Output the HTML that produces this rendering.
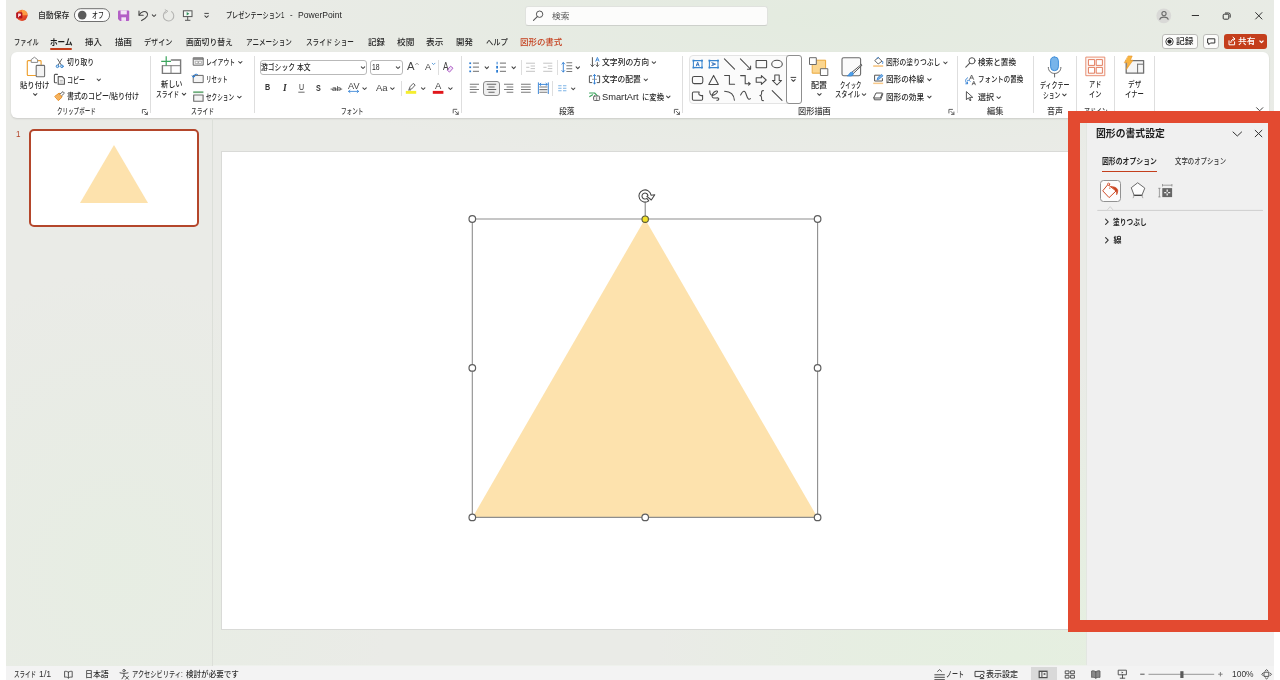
<!DOCTYPE html>
<html lang="ja">
<head>
<meta charset="utf-8">
<title>プレゼンテーション1 - PowerPoint</title>
<style>
html,body{margin:0;padding:0;}
body{width:1280px;height:680px;overflow:hidden;background:#fff;font-family:"Liberation Sans","Noto Sans CJK JP",sans-serif;}
#app{position:relative;width:1280px;height:680px;overflow:hidden;background:#fff;}
#app div{position:absolute;box-sizing:border-box;}
#win{left:6px;top:0;width:1268px;height:680px;background:#eaebe7;overflow:hidden;}
#glow{left:0;top:0;width:1268px;height:680px;background:
 radial-gradient(ellipse 360px 300px at 1010px 660px, rgba(229,239,224,1), rgba(229,239,224,.75) 45%, rgba(229,239,224,0) 100%),
 radial-gradient(ellipse 620px 150px at 820px 20px, rgba(227,235,223,.95), rgba(227,235,223,0) 100%),
 radial-gradient(ellipse 280px 300px at 110px 570px, rgba(230,238,226,.8), rgba(230,238,226,0) 100%);}
#search{left:524.5px;top:6px;width:243px;height:19.6px;background:#fcfcfb;border:1px solid #e0e2de;border-bottom-color:#cdd0cb;border-radius:3px;}
#ribbon{left:11px;top:52px;width:1258px;height:66px;background:#fff;border-radius:6px;box-shadow:0 1px 2px rgba(0,0,0,.13);}
.sep{width:1px;background:#dedede;}
#hometab{left:50px;top:48px;width:22px;height:2px;background:#c43e1c;border-radius:1px;}
.combo{background:#fff;border:1px solid #b9b9b9;border-radius:3px;}
#gallery{left:688.5px;top:55px;width:113px;height:49.3px;background:#fbfbfb;border:1px solid #e4e4e4;border-radius:4px;}
#galbtn{left:785.8px;top:55px;width:15.8px;height:49.3px;background:#fff;border:1px solid #8f8f8f;border-radius:3px;}
#alignsel{left:483px;top:80.5px;width:17px;height:15.5px;background:#f0f0f0;border:1px solid #8c8c8c;border-radius:3px;}
.btn{background:#fcfcfb;border:1px solid #bcbcb9;border-radius:3px;}
#share{left:1224px;top:33.8px;width:43px;height:15.4px;background:#c43e1c;border-radius:3px;}
#thumbdiv{left:212px;top:118px;width:1px;height:548px;background:#dcdfd9;}
#thumb{left:28.5px;top:128.5px;width:170.6px;height:98.5px;background:#fff;border:2px solid #b4462b;border-radius:5px;}
#slide{left:220.6px;top:151px;width:858px;height:478.6px;background:#fff;border:1px solid #d9dad7;}
#pane{left:1085.8px;top:118px;width:188.2px;height:548px;background:#f0f0f0;border-left:1px solid #e3e6e1;}
#panestrip{left:213px;top:665px;width:873.5px;height:1px;background:#eef1ec;}
#redbox{left:1068px;top:111px;width:212px;height:521px;border:12px solid #e34a30;z-index:5;}
#optul{left:1102px;top:170.5px;width:55px;height:1.5px;background:#c43e1c;}
#fillbtn{left:1099.5px;top:180.3px;width:21.4px;height:21.3px;background:#fcfcfc;border:1px solid #929292;border-radius:3.5px;}
#paneline{left:1097.5px;top:209.7px;width:165px;height:1px;background:#d6d6d6;}
#status{left:6px;top:666px;width:1268px;height:14px;background:#f3f3f3;}
#viewsel{left:1030.5px;top:667.4px;width:26px;height:12.6px;background:#d9d9d9;}
#texts{position:absolute;left:0;top:0;width:1280px;height:680px;will-change:transform;}
#texts .t{position:absolute;white-space:pre;transform-origin:0 50%;display:block;}
#icons{position:absolute;left:0;top:0;width:1280px;height:680px;overflow:visible;}

</style>
</head>
<body>
<div id="app">
<div id="win"><div id="glow"></div></div>
<div id="search"></div>
<div id="hometab"></div>
<div id="ribbon"></div>
<div class="sep" style="left:150px;top:56px;height:57px"></div>
<div class="sep" style="left:254px;top:56px;height:57px"></div>
<div class="sep" style="left:461px;top:56px;height:57px"></div>
<div class="sep" style="left:682px;top:56px;height:57px"></div>
<div class="sep" style="left:957px;top:56px;height:57px"></div>
<div class="sep" style="left:1033px;top:56px;height:57px"></div>
<div class="sep" style="left:1076px;top:56px;height:57px"></div>
<div class="sep" style="left:1114px;top:56px;height:57px"></div>
<div class="sep" style="left:1154px;top:56px;height:57px"></div>
<div class="sep" style="left:438px;top:60px;height:15px"></div>
<div class="sep" style="left:401px;top:81px;height:15px"></div>
<div class="sep" style="left:521px;top:60px;height:15px"></div>
<div class="sep" style="left:557px;top:60px;height:15px"></div>
<div class="sep" style="left:552px;top:81px;height:15px"></div>
<div class="combo" style="left:259.5px;top:60px;width:107.5px;height:14.5px"></div>
<div class="combo" style="left:369.5px;top:60px;width:33px;height:14.5px"></div>
<div id="alignsel"></div>
<div id="gallery"></div>
<div id="galbtn"></div>
<div class="btn" style="left:1162.2px;top:33.6px;width:35.5px;height:15.6px"></div>
<div class="btn" style="left:1203px;top:33.6px;width:16px;height:15.6px"></div>
<div id="share"></div>
<div id="thumbdiv"></div>
<div id="thumb"></div>
<div id="slide"></div>
<div id="pane"></div>
<div id="panestrip"></div>
<div id="optul"></div>
<div id="fillbtn"></div>
<div id="paneline"></div>
<div id="status"></div>
<div id="viewsel"></div>
<div id="redbox"></div>

<svg id="icons" width="1280" height="680" viewBox="0 0 1280 680">
<defs>
<linearGradient id="ppg" x1="0" y1="0" x2="1" y2="1"><stop offset="0" stop-color="#ff9a3c"/><stop offset=".55" stop-color="#f0562a"/><stop offset="1" stop-color="#c92b1e"/></linearGradient>
<path id="car" d="M-1.7,-0.8 L0,0.9 L1.7,-0.8" fill="none" stroke="#404040" stroke-width="1.05" stroke-linecap="round" stroke-linejoin="round"/>
<g id="launch"><path d="M0,3.6 V0 H3.6" fill="none" stroke="#555" stroke-width=".9"/><path d="M2,2 L5,5 M5,2.6 V5 H2.6" fill="none" stroke="#555" stroke-width=".9"/></g>
</defs>
<!-- triangle on slide -->
<polygon points="645,219 817.5,517.5 472.5,517.5" fill="#fde2ad"/>
<!-- thumbnail triangle -->
<polygon points="114,145 148,203 80,203" fill="#fde2ad"/>
<g id="titlebar">
<!-- ppt logo -->
<circle cx="22" cy="15.3" r="5.6" fill="url(#ppg)"/>
<path d="M22,9.7 A5.6,5.6 0 0 1 27.6,15.3 L22,15.3 Z" fill="#ffb04a" opacity=".75"/>
<rect x="16.2" y="12.2" width="6.2" height="6.2" rx="1.2" fill="#b3131f"/>
<path d="M18.1,13.5 h1.6 a1.3,1.3 0 0 1 0,2.6 h-.6 v1.1 h-1 z" fill="#ffd9e0"/>
<!-- toggle -->
<rect x="74.4" y="8.7" width="35.2" height="12.8" rx="6.4" fill="#fdfdfd" stroke="#616161" stroke-width=".9"/>
<circle cx="82.2" cy="15.1" r="4.3" fill="#5c5c5c"/>
<!-- save -->
<path d="M118,11.4 a1,1 0 0 1 1,-1 h9.2 a1,1 0 0 1 1,1 v8.5 a1,1 0 0 1 -1,1 h-8.2 l-2,-2 z" fill="#b35fc6"/>
<rect x="120.6" y="10.4" width="6.2" height="4" fill="#f3e6f6"/>
<rect x="121.4" y="17.3" width="4.6" height="3.6" fill="#f3e6f6"/>
<!-- undo -->
<path d="M139,11 v4.2 h4.2" fill="none" stroke="#444" stroke-width="1.1" stroke-linecap="round" stroke-linejoin="round"/>
<path d="M139.2,15 C141,11.6 145,10.6 146.9,12.6 C148.8,14.8 147.2,17.6 141.6,20.6" fill="none" stroke="#444" stroke-width="1.1" stroke-linecap="round"/>
<use href="#car" x="154" y="15.6"/>
<!-- redo (disabled) -->
<path d="M171.6,11.6 A5.2,5.2 0 1 1 165.4,11.7" fill="none" stroke="#b4b4b2" stroke-width="1.1" stroke-linecap="round"/>
<path d="M165.2,9.8 L167.8,11.2 L165.6,13" fill="none" stroke="#b4b4b2" stroke-width="1" stroke-linecap="round" stroke-linejoin="round"/>
<!-- present -->
<rect x="183.4" y="10.8" width="8.6" height="5.8" fill="#f4f8f4" stroke="#555" stroke-width="1"/>
<path d="M186.7,12 L189.3,13.7 L186.7,15.4 Z" fill="#2f8f5b"/>
<path d="M187.7,16.6 V20.2 M185,20.3 H190.4" fill="none" stroke="#555" stroke-width="1"/>
<!-- qat customize -->
<path d="M204.4,13.4 H208.8" stroke="#444" stroke-width="1" fill="none"/>
<use href="#car" x="206.6" y="16.6"/>
<!-- search magnifier -->
<circle cx="539.6" cy="14.2" r="3.2" fill="none" stroke="#555" stroke-width="1"/>
<path d="M537.3,16.6 L533.5,20.4" stroke="#555" stroke-width="1.1" stroke-linecap="round"/>
<!-- avatar -->
<circle cx="1163.8" cy="15.8" r="7.4" fill="#d9d9d7"/>
<circle cx="1164" cy="13.6" r="2.1" fill="none" stroke="#6a6a6a" stroke-width="1.1"/>
<path d="M1159.8,19.8 C1160.2,16.2 1167.8,16.2 1168.2,19.8" fill="none" stroke="#6a6a6a" stroke-width="1.1"/>
<!-- window controls -->
<path d="M1191.8,15.5 H1199" stroke="#333" stroke-width="1"/>
<rect x="1223.2" y="14.2" width="5.6" height="5" rx="1" fill="none" stroke="#333" stroke-width="1"/>
<path d="M1225,13 h3.6 a1.6,1.6 0 0 1 1.6,1.6 v3" fill="none" stroke="#333" stroke-width="1"/>
<path d="M1255.4,12.3 L1262.2,19.3 M1262.2,12.3 L1255.4,19.3" stroke="#333" stroke-width="1"/>
<!-- record button icon -->
<circle cx="1169.5" cy="41.6" r="3.7" fill="none" stroke="#333" stroke-width=".9"/>
<circle cx="1169.5" cy="41.6" r="2.1" fill="#222"/>
<!-- comment icon -->
<path d="M1207.6,38.8 h7.2 v4.2 h-4.4 l-1.6,1.6 v-1.6 h-1.2 z" fill="none" stroke="#333" stroke-width="1" stroke-linejoin="round"/>
<!-- share icon -->
<path d="M1229,40.4 v4.4 h5.6 v-3.4" fill="none" stroke="#fff" stroke-width="1"/>
<path d="M1230.8,42.6 C1231,40.2 1232.4,39 1234.6,38.9 M1233,37.2 L1235,38.9 L1233,40.6" fill="none" stroke="#fff" stroke-width="1" stroke-linecap="round" stroke-linejoin="round"/>
<path d="M1259.9,41 L1261.5,42.6 L1263.1,41" fill="none" stroke="#fff" stroke-width="1.2" stroke-linecap="round" stroke-linejoin="round"/>
<!-- collapse ribbon chevron -->
<path d="M1256.3,107.4 L1259.7,110.8 L1263.1,107.4" fill="none" stroke="#444" stroke-width="1"/>
</g>

<g id="ribbonicons" fill="none" stroke-linecap="round" stroke-linejoin="round">
<!-- paste -->
<path d="M31.2,60.6 H28.2 a.9,.9 0 0 0 -.9,.9 V74.6 a.9,.9 0 0 0 .9,.9 H35.6" stroke="#eda02f" stroke-width="1.15"/>
<path d="M37.6,60.6 H40.2 a.9,.9 0 0 1 .9,.9 V64.6" stroke="#eda02f" stroke-width="1.15"/>
<path d="M31.2,62 V59.6 L34.4,57.2 L37.6,59.6 V62 Z" stroke="#8a8a8a" stroke-width="1" fill="#fff"/>
<rect x="36.2" y="65.4" width="8.4" height="11.4" rx=".8" fill="#f3f3f3" stroke="#707070" stroke-width="1.1"/>
<use href="#car" x="35.2" y="94.5"/>
<!-- cut -->
<path d="M57.6,59 L61.4,65.2 M61.8,59 L58,65.2" stroke="#666" stroke-width="1"/>
<circle cx="57.5" cy="66.3" r="1.3" fill="#d6e8f7" stroke="#3a86cf" stroke-width="1"/>
<circle cx="61.9" cy="66.3" r="1.3" fill="#d6e8f7" stroke="#3a86cf" stroke-width="1"/>
<!-- copy -->
<path d="M57.4,74.4 H55.2 a.8,.8 0 0 0 -.8,.8 V82 a.8,.8 0 0 0 .8,.8 H56.6" stroke="#555" stroke-width="1.1"/>
<path d="M58.2,76.6 H62.2 L64.4,78.8 V84.2 H58.2 Z" fill="#fafafa" stroke="#555" stroke-width="1.1"/>
<path d="M60.2,80.4 H62.4 M60.2,82 H62.4" stroke="#999" stroke-width=".7"/>
<use href="#car" x="98.8" y="79.8"/>
<!-- format painter -->
<path d="M55,96.2 L59.2,93 L62.2,97 L58.6,100.4 Z" fill="#f6b25c" stroke="#e88a1c" stroke-width=".9"/>
<path d="M60,94 L63,91.6 L64.4,93.2 L61.6,95.8" stroke="#666" stroke-width="1" fill="#fff"/>
<!-- launchers -->
<use href="#launch" x="142.4" y="109.5"/>
<use href="#launch" x="453.2" y="109.3"/>
<use href="#launch" x="674.4" y="109.4"/>
<use href="#launch" x="948.9" y="109.4"/>
<!-- new slide -->
<path d="M162.4,65.8 V73.4 H180.6 V60 H171.4" stroke="#7a7a7a" stroke-width="1.4" stroke-linejoin="miter"/>
<path d="M162.4,65.7 H180.4 M171,65.7 V73.4" stroke="#7a7a7a" stroke-width="1"/>
<path d="M161.2,61.3 H171 M166.2,56.2 V65.7" stroke="#3ba55d" stroke-width="1.2" stroke-linecap="butt"/>
<use href="#car" x="184" y="94.2"/>
<!-- layout -->
<rect x="193.6" y="57.8" width="9.6" height="7.4" fill="#f4f4f4" stroke="#6a6a6a" stroke-width="1"/>
<path d="M193.6,59 H203.2" stroke="#6a6a6a" stroke-width="1.4" stroke-linecap="butt"/>
<rect x="195.6" y="61.2" width="2.4" height="2.4" fill="#fff" stroke="#8a8a8a" stroke-width=".6"/>
<rect x="199" y="61.2" width="2.4" height="2.4" fill="#fff" stroke="#8a8a8a" stroke-width=".6"/>
<use href="#car" x="240.3" y="62.3"/>
<!-- reset -->
<rect x="193.6" y="75.4" width="9.6" height="7.2" fill="#f4f4f4" stroke="#6a6a6a" stroke-width="1"/>
<path d="M197.4,74.4 C195.6,73.6 193.4,74.6 193.4,77.2 M192.2,75.8 L193.4,77.4 L195,76.2" stroke="#2b7cd3" stroke-width="1"/>
<!-- section -->
<path d="M193.2,92.2 H203.4" stroke="#6fae7d" stroke-width="1.8" stroke-linecap="butt"/>
<rect x="193.7" y="95" width="9.4" height="6.2" fill="#f4f4f4" stroke="#6a6a6a" stroke-width="1.1"/>
<use href="#car" x="239.4" y="97.1"/>
<!-- combo carets -->
<use href="#car" x="363" y="67.6"/>
<use href="#car" x="398" y="67.6"/>
<!-- font grow/shrink carets -->
<path d="M415.6,64.6 L417,63.2 L418.4,64.6" stroke="#777" stroke-width=".8"/>
<path d="M432.2,63.2 L433.6,64.6 L435,63.2" stroke="#3a86cf" stroke-width=".8"/>
<!-- clear formatting eraser -->
<path d="M447.4,69.8 L450.6,66.2 L453,68.2 L449.8,71.8 Z" fill="#f3e2f8" stroke="#a650c0" stroke-width=".9"/>
<path d="M298.7,92.2 H304.2" stroke="#444" stroke-width=".8"/>
<!-- strikethrough -->
<path d="M331,89.1 H341.8" stroke="#444" stroke-width=".8"/>
<!-- AV arrow -->
<path d="M348.6,91.4 H358.6 M350,90.2 L348.6,91.4 L350,92.6 M357.2,90.2 L358.6,91.4 L357.2,92.6" stroke="#2b7cd3" stroke-width=".8"/>
<use href="#car" x="364.6" y="88.6"/>
<use href="#car" x="392.4" y="88.6"/>
<!-- highlighter -->
<path d="M409.2,89 L410,86.8 L413.2,83.4 L415.2,85 L412,88.6 Z" stroke="#555" stroke-width=".9" fill="#fff"/>
<path d="M408.4,90 L410.6,90" stroke="#555" stroke-width=".8"/>
<rect x="405.8" y="90.9" width="10.4" height="2.9" fill="#f5ee2e" stroke="none"/>
<use href="#car" x="423.2" y="88.6"/>
<!-- font color bar -->
<rect x="432.8" y="90.9" width="10.6" height="2.9" fill="#e0161b" stroke="none"/>
<use href="#car" x="450.4" y="88.6"/>
<!-- bullets -->
<g stroke="#8a8a8a" stroke-width="1.2" stroke-linecap="butt">
<path d="M472.9,63.2 H479 M472.9,67.2 H479 M472.9,71.3 H479"/>
<path d="M499.9,63.2 H506 M499.9,67.2 H506 M499.9,71.3 H506"/>
</g>
<g fill="#2b7cd3" stroke="none"><rect x="469.3" y="62.4" width="1.8" height="1.7"/><rect x="469.3" y="66.4" width="1.8" height="1.7"/><rect x="469.3" y="70.5" width="1.8" height="1.7"/>
<rect x="496.6" y="61.8" width="1" height="2.6"/><rect x="496.2" y="65.9" width="1.8" height="2.6"/><rect x="496.2" y="70" width="1.8" height="2.6"/></g>
<use href="#car" x="486.8" y="67.7"/>
<use href="#car" x="513.7" y="67.7"/>
<!-- indent (disabled) -->
<g stroke="#c4c4c4" stroke-width="1" stroke-linecap="butt">
<path d="M526,63.2 H535 M530.6,66 H535 M530.6,68.6 H535 M526,71.3 H535 M526.2,67.3 H529.4"/>
<path d="M543.2,63.2 H552.3 M547.8,66 H552.3 M547.8,68.6 H552.3 M543.2,71.3 H552.3 M543.4,67.3 H546.6"/>
</g>
<!-- line spacing -->
<path d="M563.3,62.6 V72 M561.9,64 L563.3,62.6 L564.7,64 M561.9,70.6 L563.3,72 L564.7,70.6" stroke="#2b7cd3" stroke-width=".9"/>
<path d="M566.4,62.8 H572.2 M566.4,65.8 H572.2 M566.4,68.7 H572.2 M566.4,71.5 H572.2" stroke="#7a7a7a" stroke-width="1.1" stroke-linecap="butt"/>
<use href="#car" x="577.8" y="67.7"/>
<!-- alignment -->
<g stroke="#7a7a7a" stroke-width="1.05" stroke-linecap="butt">
<path d="M469.8,84.3 H479 M469.8,86.9 H476.6 M469.8,89.5 H479 M469.8,92.2 H476.6"/>
<path d="M486.8,84.3 H496.2 M488.4,86.9 H494.6 M486.8,89.5 H496.2 M488.4,92.2 H494.6" stroke="#666"/>
<path d="M504,84.3 H513.3 M506.6,86.9 H513.3 M504,89.5 H513.3 M506.6,92.2 H513.3"/>
<path d="M521,84.3 H530.7 M521,86.9 H530.7 M521,89.5 H530.7 M521,92.2 H530.7"/>
<path d="M539.4,87 H547.4 M539.4,89.6 H547.4 M539.4,92.3 H547.4"/>
</g>
<path d="M538.4,82.8 V93.6 M548.3,82.8 V93.6 M539.6,84.4 H547.2 M540.8,83.3 L539.6,84.4 L540.8,85.5 M546,83.3 L547.2,84.4 L546,85.5" stroke="#2b7cd3" stroke-width=".9"/>
<!-- columns -->
<path d="M558.2,85.7 H561.6 M558.2,88.2 H561.6 M558.2,90.8 H561.6 M563,85.7 H566.4 M563,88.2 H566.4 M563,90.8 H566.4" stroke="#7db4e6" stroke-width="1.1" stroke-linecap="butt"/>
<use href="#car" x="573.2" y="88.8"/>
<!-- text direction -->
<path d="M592.4,57.6 V66.4 M590.8,64.8 L592.4,66.4 L594,64.8" stroke="#555" stroke-width="1"/>
<path d="M597.4,62.6 V66.4 M596,65 L597.4,66.4 L598.8,65" stroke="#555" stroke-width=".9"/>
<path d="M595.8,61.2 L597.4,57.4 L599,61.2 M596.4,60 H598.4" stroke="#2b7cd3" stroke-width=".8"/>
<use href="#car" x="653.9" y="62.6"/>
<!-- text align -->
<path d="M591.6,75.9 H589.4 V82.6 H591.6 M597.4,75.9 H599.6 V82.6 H597.4" stroke="#555" stroke-width="1" stroke-linejoin="miter"/>
<path d="M594.5,74.6 V84 M593.2,75.9 L594.5,74.6 L595.8,75.9 M593.2,82.7 L594.5,84 L595.8,82.7" stroke="#2b7cd3" stroke-width=".9"/>
<path d="M592.4,79.3 H596.6" stroke="#888" stroke-width=".8"/>
<use href="#car" x="645.8" y="79.8"/>
<!-- smartart -->
<path d="M589.6,93 H594.6 L597.2,95.6 M589.8,96.6 L592.6,94.8" stroke="#3ba55d" stroke-width="1.2"/>
<rect x="593.6" y="96" width="6" height="4.5" rx=".8" fill="#f2f2f2" stroke="#666" stroke-width="1"/>
<path d="M596.6,97.6 V100.4" stroke="#666" stroke-width=".7"/>
<use href="#car" x="668.3" y="96.9"/>
<!-- shapes gallery -->
<g stroke="#4a4a4a" stroke-width="1.05">
<!-- row1 -->
<rect x="693.4" y="60.6" width="8.6" height="7" stroke="#3a86cf" fill="#fff"/>
<g fill="#3a86cf" stroke="none"><rect x="692.5" y="59.7" width="1.8" height="1.8"/><rect x="701.1" y="59.7" width="1.8" height="1.8"/><rect x="692.5" y="66.7" width="1.8" height="1.8"/><rect x="701.1" y="66.7" width="1.8" height="1.8"/></g>
<path d="M696.3,66 L697.7,62.2 L699.1,66 M696.8,64.8 H698.6" stroke="#2b6cb8" stroke-width=".9"/>
<rect x="709.4" y="60.6" width="8.6" height="7" stroke="#3a86cf" fill="#fff"/>
<g fill="#3a86cf" stroke="none"><rect x="708.5" y="59.7" width="1.8" height="1.8"/><rect x="717.1" y="59.7" width="1.8" height="1.8"/><rect x="708.5" y="66.7" width="1.8" height="1.8"/><rect x="717.1" y="66.7" width="1.8" height="1.8"/></g>
<path d="M711.8,62.7 L715.6,64.1 L711.8,65.5 M713,63.2 V65" stroke="#2b6cb8" stroke-width=".9"/>
<path d="M724.4,58.8 L734.6,69.2"/>
<path d="M740.4,58.8 L750.4,69 M750.6,66 V69.2 H747.4" />
<rect x="756.1" y="60.5" width="10.5" height="7.2" rx=".5"/>
<ellipse cx="777" cy="64" rx="5.3" ry="3.7"/>
<!-- row2 -->
<rect x="692.4" y="76.4" width="10.4" height="7.2" rx="1.8"/>
<path d="M713.6,75.4 L718.4,84.4 H708.8 Z"/>
<path d="M724.6,75.4 H729.4 V84.2 H734.6" stroke-linejoin="miter"/>
<path d="M740.6,75.6 H745.2 V83.8 H750 M748.6,82.4 L750.2,83.8 L748.6,85.2" stroke-linejoin="miter"/>
<path d="M756.2,77.8 H761.4 V75.6 L766.2,80 L761.4,84.4 V82.2 H756.2 Z"/>
<path d="M774.8,75 H779.2 V80.4 H781.6 L777,85 L772.4,80.4 H774.8 Z"/>
<!-- row3 -->
<path d="M693.6,92 H699.2 C698,94.6 699.6,96.2 702.6,95.4 V99 Q702.6,100.2 701.4,100.2 H693.6 Q692.4,100.2 692.4,99 V93.2 Q692.4,92 693.6,92 Z"/>
<path d="M709.8,90.8 C709.6,94.2 711.2,96.4 714.4,94.8 C717.6,93.2 718.6,90.6 716.2,91 C713.4,91.6 710.4,96.4 713.2,97.8 C715.4,98.8 718.6,96.8 718.8,98.8 C718.8,99.8 718,100.4 716.8,100.2"/>
<path d="M724.6,91.2 C730.4,91.4 734,94.6 734.4,100.2"/>
<path d="M740.6,95 C743.4,89.8 745,90.4 746.4,95 C747.6,99 749,100 750.4,98.6"/>
<path d="M763.4,90.6 C761.2,90.6 761.6,92 761.6,93.4 C761.6,94.8 761,95.4 759.9,95.6 C761,95.8 761.6,96.4 761.6,97.8 C761.6,99.2 761.2,100.6 763.4,100.6"/>
<path d="M772.2,90.6 L782,100.4"/>
</g>
<!-- gallery more button glyph -->
<path d="M791,77.4 H795.8" stroke="#444" stroke-width="1"/>
<use href="#car" x="793.4" y="80.4"/>
<!-- arrange -->
<rect x="812.6" y="60.2" width="13" height="13" fill="#fbd68f" stroke="#eaa73a" stroke-width="1"/>
<rect x="809.9" y="57.7" width="6.4" height="6.8" fill="#fdfdfd" stroke="#6a6a6a" stroke-width="1"/>
<rect x="820.8" y="68.7" width="7" height="6.8" fill="#fdfdfd" stroke="#6a6a6a" stroke-width="1"/>
<use href="#car" x="819.4" y="94.4"/>
<!-- quick styles -->
<rect x="842" y="57.7" width="18.6" height="18" rx="1.6" fill="#fafafa" stroke="#6a6a6a" stroke-width="1.1"/>
<path d="M852.2,72 L861.4,64.4 L862,65.2 L853.4,73.4" stroke="#555" stroke-width="1" fill="#fff"/>
<path d="M847.8,75.8 C849.2,75 849.4,72.6 851.2,72.2 C852.8,71.8 854,73.4 853,74.8 C851.8,76.4 849.4,76.2 847.8,75.8 Z" fill="#4da0ea" stroke="#2b7cd3" stroke-width=".7"/>
<use href="#car" x="864" y="94.6"/>
<!-- shape fill -->
<path d="M878.6,57.8 L882,61.2 L878.2,64 L875,60.8 Z" stroke="#555" stroke-width=".9"/>
<path d="M877,58.2 L878.6,57.8 M882.6,61.4 C883,62.4 883,63 882.6,63.6" stroke="#2b7cd3" stroke-width=".9"/>
<rect x="873.2" y="65.2" width="10" height="1.7" fill="#f8c98a" stroke="none"/>
<use href="#car" x="945.4" y="62.8"/>
<!-- shape outline -->
<path d="M880,75.2 H874.6 V81 H882.4 V78.6" stroke="#555" stroke-width="1" stroke-linejoin="miter"/>
<path d="M877.2,79.4 L877.8,77.6 L881.6,74.4 L883,75.8 L879.2,79 Z" fill="#7db4e6" stroke="#2b7cd3" stroke-width=".8"/>
<rect x="873.2" y="82.6" width="10" height="1.5" fill="#f8c98a" stroke="none"/>
<use href="#car" x="929.4" y="79.7"/>
<!-- shape effects -->
<path d="M876.4,93 H882.4 L880.4,98 H874 Z" stroke="#555" stroke-width="1" fill="#fff"/>
<path d="M874,98 L874.4,99.8 H880.6 L882.8,94" stroke="#555" stroke-width="1"/>
<use href="#car" x="929.4" y="97"/>
<!-- find -->
<circle cx="972" cy="60.8" r="3.1" stroke="#555" stroke-width="1"/>
<path d="M969.7,63.2 L965.8,67.2" stroke="#555" stroke-width="1.1"/>
<!-- replace fonts -->
<path d="M967.6,77.8 C965,78.8 964.8,82.4 967.4,83.6 M965.8,83.8 L967.6,83.7 L967.4,81.9 M967.6,80.4 C968.8,80 969.6,80.4 970.2,81.2" stroke="#2b7cd3" stroke-width=".9"/>
<path d="M969.6,79.4 L971.6,75 L973.6,79.4 M970.4,78 H972.8" stroke="#555" stroke-width=".85"/>
<path d="M972.2,84.8 L973.8,81.2 L975.4,84.8 M972.8,83.6 H974.8" stroke="#555" stroke-width=".8"/>
<!-- select -->
<path d="M966.4,92 V99.8 L968.4,97.8 L970,100.8 L971,100.2 L969.6,97.4 H972.4 Z" stroke="#444" stroke-width=".9" fill="#fff"/>
<use href="#car" x="998.7" y="97.6"/>
<!-- dictate -->
<rect x="1050.6" y="56.9" width="7.8" height="13.8" rx="3.9" fill="#78b4ea" stroke="#3f8fda" stroke-width="1"/>
<path d="M1048.3,67.4 C1048.3,75.6 1060.9,75.6 1060.9,67.4 M1054.6,73.6 V77" stroke="#666" stroke-width="1"/>
<use href="#car" x="1064.4" y="94.9"/>
<!-- add-ins -->
<rect x="1086.2" y="57.1" width="18.6" height="18.6" fill="#fdf6f3" stroke="#e58567" stroke-width=".9"/>
<g stroke="#e0714f" stroke-width=".9" fill="#fff"><rect x="1088.8" y="59.6" width="5.8" height="5.8"/><rect x="1096.6" y="59.6" width="5.8" height="5.8"/><rect x="1088.8" y="67.4" width="5.8" height="5.8"/><rect x="1096.6" y="67.4" width="5.8" height="5.8"/></g>
<!-- designer -->
<rect x="1126.2" y="60.6" width="17.4" height="12.6" fill="#f6f6f6" stroke="#707070" stroke-width="1.3"/>
<path d="M1137.6,64.2 V73 M1137.6,64.2 H1143.4" stroke="#707070" stroke-width="1"/>
<path d="M1128.4,56 H1132.2 L1130.4,60.2 H1133 L1126.4,69.4 L1127.8,62.8 H1124.6 Z" fill="#f9b53f" stroke="#e8952a" stroke-width=".6"/>
</g>

<g id="selection" fill="none">
<path d="M472.3,219 H817.6 V517.4 H472.3 Z" stroke="#8e8e8e" stroke-width="1.1"/>
<path d="M645.2,202.6 V216" stroke="#7a7a7a" stroke-width="1"/>
<!-- rotate handle -->
<path d="M648.76,200.81 A6.1,6.1 0 1 1 651.04,195.15 L654.8,194.7 L651.3,200 L646.9,196.4 L647.97,195.58 A3.0,3.0 0 1 0 646.85,198.36 Z" fill="#fff" stroke="#444" stroke-width="1.05" stroke-linejoin="round"/>
<g fill="#fff" stroke="#5e5e5e" stroke-width="1.2">
<circle cx="472.3" cy="219" r="3.3"/><circle cx="817.6" cy="219" r="3.3"/>
<circle cx="472.3" cy="367.9" r="3.3"/><circle cx="817.6" cy="367.9" r="3.3"/>
<circle cx="472.3" cy="517.4" r="3.3"/><circle cx="645.2" cy="517.4" r="3.3"/><circle cx="817.6" cy="517.4" r="3.3"/>
</g>
<circle cx="645.2" cy="219.2" r="3.2" fill="#f3e12a" stroke="#5a5a3a" stroke-width="1.1"/>
</g>

<g id="paneicons" fill="none" stroke-linecap="round" stroke-linejoin="round">
<path d="M1233,132 L1237.3,136 L1241.6,132" stroke="#333" stroke-width="1"/>
<path d="M1255.2,130.3 L1261.9,136.8 M1261.9,130.3 L1255.2,136.8" stroke="#333" stroke-width="1"/>
<!-- paint bucket -->
<path d="M1108.2,184.8 L1116,191 L1109.1,197.6 L1103,191.1 Z" stroke="#d04a26" stroke-width="1" fill="#fff"/>
<circle cx="1108.6" cy="184.2" r="1.1" stroke="#d04a26" stroke-width=".8" fill="#fff"/>
<circle cx="1109.8" cy="188.1" r=".7" fill="#c9431f" stroke="none"/>
<path d="M1111.4,186.4 C1115,186.6 1117.8,188.4 1117.8,190.6 C1117.8,192.4 1117.2,193.8 1116.6,194.8 C1116.8,192.6 1116.4,191 1115.6,190.2 Z" fill="#c9431f" stroke="#c9431f" stroke-width=".6"/>
<!-- pentagon -->
<path d="M1138,183 L1144.8,188.1 L1141.9,195.3 H1134.1 L1131.4,188.1 Z" stroke="#6a6a6a" stroke-width="1" fill="#fdfdfd"/>
<path d="M1134.1,195.4 H1141.9" stroke="#444" stroke-width="1.1"/>
<path d="M1134,195.8 L1133.2,197.8 M1142,195.8 L1142.8,197.8" stroke="#999" stroke-width=".8"/>
<!-- size & properties -->
<rect x="1162.3" y="188.1" width="9.8" height="9" fill="#666" stroke="none"/>
<path d="M1167.2,189.6 V195.6 M1164.2,192.6 H1170.2" stroke="#f0f0f0" stroke-width="1.3" stroke-linecap="butt"/>
<rect x="1166.3" y="191.7" width="1.8" height="1.8" fill="#666" stroke="none"/>
<path d="M1162.3,185.2 H1172.1 M1162.5,184 V186.5 M1171.9,184 V186.5 M1159.4,188.1 V197.1 M1158.3,188.3 H1160.5 M1158.3,196.9 H1160.5" stroke="#8a8a8a" stroke-width=".8" stroke-linecap="butt"/>
<!-- divider with notch -->
<path d="M1097.6,210.4 H1107 L1110.2,206.6 L1113.4,210.4 H1262.4" stroke="#d2d2d2" stroke-width="1" fill="none"/>
<!-- section chevrons -->
<path d="M1105.6,219.2 L1108.2,221.8 L1105.6,224.4" stroke="#333" stroke-width="1.1"/>
<path d="M1105.6,237.6 L1108.2,240.2 L1105.6,242.8" stroke="#333" stroke-width="1.1"/>
</g>

<g id="statusicons" fill="none" stroke-linecap="round" stroke-linejoin="round">
<!-- spell book -->
<path d="M68.4,672.2 C67.2,671.2 65.6,671.2 64.6,671.4 V677.2 C65.8,677 67.2,677 68.4,678 C69.6,677 71,677 72.2,677.2 V671.4 C71.2,671.2 69.6,671.2 68.4,672.2 Z M68.4,672.2 V678" stroke="#444" stroke-width=".9"/>
<!-- accessibility -->
<circle cx="124" cy="670.6" r="1.2" stroke="#444" stroke-width=".8"/>
<path d="M120,672.8 C122.6,673.6 125.4,673.6 128,672.8 M124,673.6 V675.6 L122,678.8 M124,675.6 L125,676.6" stroke="#444" stroke-width=".9"/>
<path d="M125.6,676.4 L128.4,679.2 M128.4,676.4 L125.6,679.2" stroke="#444" stroke-width=".9"/>
<!-- notes -->
<path d="M937.6,671.4 L939.6,669.6 L941.6,671.4" stroke="#444" stroke-width=".9"/>
<path d="M934.4,674.8 H944.8 M934.4,677.3 H944.8 M934.4,679.7 H944.8" stroke="#444" stroke-width="1" stroke-linecap="butt"/>
<!-- display settings -->
<path d="M979.6,676.6 H975 V671.4 H984 V673.4" stroke="#444" stroke-width="1" stroke-linejoin="miter"/>
<circle cx="982" cy="676" r="1.7" stroke="#444" stroke-width=".9" fill="#f3f3f3"/>
<path d="M980.2,678.6 H983.8" stroke="#444" stroke-width="1"/>
<!-- normal view -->
<rect x="1038.6" y="670.6" width="9" height="7.6" fill="#4e4e4e" stroke="none"/>
<rect x="1039.8" y="672" width="1.6" height="5" fill="#ececec" stroke="none"/>
<rect x="1042.4" y="672" width="4.2" height="5" fill="#ececec" stroke="none"/>
<rect x="1043.6" y="673.2" width="1.8" height="1.6" fill="#4e4e4e" stroke="none"/>
<!-- sorter -->
<g stroke="#444" stroke-width=".9"><rect x="1065.6" y="670.9" width="3.4" height="2.8"/><rect x="1071" y="670.9" width="3.4" height="2.8"/><rect x="1065.6" y="675.3" width="3.4" height="2.8"/><rect x="1071" y="675.3" width="3.4" height="2.8"/></g>
<!-- reading view -->
<path d="M1095.8,671.8 C1094.4,670.6 1092.8,670.6 1091.6,671 V677.4 C1093,677.2 1094.6,677.2 1095.8,678.2 C1097,677.2 1098.6,677.2 1100,677.4 V671 C1098.8,670.6 1097.2,670.6 1095.8,671.8 Z" fill="#8a8a8a" stroke="#555" stroke-width=".8"/>
<path d="M1095.8,671.8 V678.2" stroke="#555" stroke-width=".8"/>
<!-- slideshow -->
<rect x="1118.6" y="670.2" width="7.8" height="4.6" stroke="#444" stroke-width=".9" fill="#f3f3f3"/>
<path d="M1121.6,671.4 L1123.4,672.5 L1121.6,673.6 Z" fill="#444" stroke="none"/>
<path d="M1122.5,674.8 V678 M1120.2,678.2 H1124.8" stroke="#444" stroke-width=".9"/>
<!-- zoom -->
<path d="M1140.2,674.2 H1144.6" stroke="#555" stroke-width="1" stroke-linecap="butt"/>
<path d="M1148.5,674.3 H1214.2" stroke="#8c8c8c" stroke-width=".9" stroke-linecap="butt"/>
<rect x="1180.3" y="671.2" width="3.2" height="6.8" fill="#5a5a5a" stroke="none"/>
<path d="M1218.2,674.2 H1222.6 M1220.4,672 V676.4" stroke="#777" stroke-width=".9" stroke-linecap="butt"/>
<!-- fit -->
<rect x="1264.4" y="672.2" width="4.4" height="4.2" stroke="#444" stroke-width=".9"/>
<path d="M1265.2,670.9 L1266.6,669.7 L1268,670.9 M1265.2,677.7 L1266.6,678.9 L1268,677.7 M1263,673 L1261.8,674.3 L1263,675.6 M1270.2,673 L1271.4,674.3 L1270.2,675.6" stroke="#444" stroke-width=".9"/>
</g>

</svg>

<div id="texts">
<span class="t" style="left:37.9px;top:10.25px;height:12.3px;line-height:12.3px;font-size:8.2px;color:#262626;font-weight:500;transform:scaleX(0.9614);">自動保存</span>
<span class="t" style="left:91.8px;top:10.4px;height:12.0px;line-height:12.0px;font-size:8px;color:#262626;font-weight:500;transform:scaleX(0.7375);">オフ</span>
<span class="t" style="left:225.9px;top:10.25px;height:12.3px;line-height:12.3px;font-size:8.2px;color:#262626;font-weight:500;transform:scaleX(0.7467);">プレゼンテーション1</span>
<span class="t" style="left:289.6px;top:10.25px;height:12.3px;line-height:12.3px;font-size:8.2px;color:#262626;font-weight:500;transform:scaleX(0.9509);">-</span>
<span class="t" style="left:297.6px;top:10.25px;height:12.3px;line-height:12.3px;font-size:8.2px;color:#262626;font-weight:500;transform:scaleX(1.0460);">PowerPoint</span>
<span class="t" style="left:551.9px;top:11.05px;height:12.3px;line-height:12.3px;font-size:8.2px;color:#555;font-weight:400;transform:scaleX(1.0677);">検索</span>
<span class="t" style="left:13.6px;top:37.05px;height:12.3px;line-height:12.3px;font-size:8.2px;color:#262626;font-weight:500;transform:scaleX(0.7569);">ファイル</span>
<span class="t" style="left:49.9px;top:37.05px;height:12.3px;line-height:12.3px;font-size:8.2px;color:#1a1a1a;font-weight:700;transform:scaleX(0.9249);">ホーム</span>
<span class="t" style="left:84.6px;top:37.05px;height:12.3px;line-height:12.3px;font-size:8.2px;color:#262626;font-weight:500;transform:scaleX(1.0250);">挿入</span>
<span class="t" style="left:114.6px;top:37.05px;height:12.3px;line-height:12.3px;font-size:8.2px;color:#262626;font-weight:500;transform:scaleX(1.0250);">描画</span>
<span class="t" style="left:144.1px;top:37.05px;height:12.3px;line-height:12.3px;font-size:8.2px;color:#262626;font-weight:500;transform:scaleX(0.8637);">デザイン</span>
<span class="t" style="left:185.6px;top:37.05px;height:12.3px;line-height:12.3px;font-size:8.2px;color:#262626;font-weight:500;transform:scaleX(0.9524);">画面切り替え</span>
<span class="t" style="left:245.6px;top:37.05px;height:12.3px;line-height:12.3px;font-size:8.2px;color:#262626;font-weight:500;transform:scaleX(0.8035);">アニメーション</span>
<span class="t" style="left:305.6px;top:37.05px;height:12.3px;line-height:12.3px;font-size:8.2px;color:#262626;font-weight:500;transform:scaleX(0.8021);">スライド ショー</span>
<span class="t" style="left:367.6px;top:37.05px;height:12.3px;line-height:12.3px;font-size:8.2px;color:#262626;font-weight:500;transform:scaleX(1.0250);">記録</span>
<span class="t" style="left:397.1px;top:37.05px;height:12.3px;line-height:12.3px;font-size:8.2px;color:#262626;font-weight:500;transform:scaleX(1.0555);">校閲</span>
<span class="t" style="left:426.1px;top:37.05px;height:12.3px;line-height:12.3px;font-size:8.2px;color:#262626;font-weight:500;transform:scaleX(1.0555);">表示</span>
<span class="t" style="left:455.6px;top:37.05px;height:12.3px;line-height:12.3px;font-size:8.2px;color:#262626;font-weight:500;transform:scaleX(1.0250);">開発</span>
<span class="t" style="left:485.6px;top:37.05px;height:12.3px;line-height:12.3px;font-size:8.2px;color:#262626;font-weight:500;transform:scaleX(0.8870);">ヘルプ</span>
<span class="t" style="left:520.1px;top:37.05px;height:12.3px;line-height:12.3px;font-size:8.2px;color:#c43e1c;font-weight:500;transform:scaleX(1.0329);">図形の書式</span>
<span class="t" style="left:1176.0px;top:36.45px;height:12.3px;line-height:12.3px;font-size:8.2px;color:#262626;font-weight:500;transform:scaleX(1.0616);">記録</span>
<span class="t" style="left:1238.4px;top:36.45px;height:12.3px;line-height:12.3px;font-size:8.2px;color:#fff;font-weight:500;transform:scaleX(1.0555);">共有</span>
<span class="t" style="left:19.9px;top:79.65px;height:12.3px;line-height:12.3px;font-size:8.2px;color:#262626;font-weight:500;transform:scaleX(0.8942);">貼り付け</span>
<span class="t" style="left:67.3px;top:57.25px;height:12.3px;line-height:12.3px;font-size:8.2px;color:#262626;font-weight:500;transform:scaleX(0.8271);">切り取り</span>
<span class="t" style="left:67.3px;top:74.55px;height:12.3px;line-height:12.3px;font-size:8.2px;color:#262626;font-weight:500;transform:scaleX(0.7364);">コピー</span>
<span class="t" style="left:67.3px;top:91.45px;height:12.3px;line-height:12.3px;font-size:8.2px;color:#262626;font-weight:500;transform:scaleX(0.8544);">書式のコピー/貼り付け</span>
<span class="t" style="left:57.1px;top:106.05px;height:12.3px;line-height:12.3px;font-size:8.2px;color:#3a3a3a;font-weight:500;transform:scaleX(0.6768);">クリップボード</span>
<span class="t" style="left:161.4px;top:78.75px;height:12.3px;line-height:12.3px;font-size:8.2px;color:#262626;font-weight:500;transform:scaleX(0.8748);">新しい</span>
<span class="t" style="left:156.4px;top:88.95px;height:12.3px;line-height:12.3px;font-size:8.2px;color:#262626;font-weight:500;transform:scaleX(0.7050);">スライド</span>
<span class="t" style="left:205.9px;top:56.65px;height:12.3px;line-height:12.3px;font-size:8.2px;color:#262626;font-weight:500;transform:scaleX(0.7081);">レイアウト</span>
<span class="t" style="left:205.9px;top:74.45px;height:12.3px;line-height:12.3px;font-size:8.2px;color:#262626;font-weight:500;transform:scaleX(0.6623);">リセット</span>
<span class="t" style="left:206.4px;top:91.65px;height:12.3px;line-height:12.3px;font-size:8.2px;color:#262626;font-weight:500;transform:scaleX(0.6837);">セクション</span>
<span class="t" style="left:191.1px;top:106.05px;height:12.3px;line-height:12.3px;font-size:8.2px;color:#3a3a3a;font-weight:500;transform:scaleX(0.7050);">スライド</span>
<span class="t" style="left:261.4px;top:61.95px;height:12.3px;line-height:12.3px;font-size:8.2px;color:#262626;font-weight:500;transform:scaleX(0.8306);">游ゴシック 本文</span>
<span class="t" style="left:372px;top:61.95px;height:12.3px;line-height:12.3px;font-size:8.2px;color:#262626;font-weight:500;transform:scaleX(0.8343);">18</span>
<span class="t" style="left:341.4px;top:106.05px;height:12.3px;line-height:12.3px;font-size:8.2px;color:#3a3a3a;font-weight:500;transform:scaleX(0.6806);">フォント</span>
<span class="t" style="left:602.4px;top:57.05px;height:12.3px;line-height:12.3px;font-size:8.2px;color:#262626;font-weight:500;transform:scaleX(0.9564);">文字列の方向</span>
<span class="t" style="left:602.4px;top:74.35px;height:12.3px;line-height:12.3px;font-size:8.2px;color:#262626;font-weight:500;transform:scaleX(0.9474);">文字の配置</span>
<span class="t" style="left:602.4px;top:91.75px;height:12.3px;line-height:12.3px;font-size:8.2px;color:#262626;font-weight:500;transform:scaleX(1.1358);">SmartArt</span>
<span class="t" style="left:641.7px;top:91.75px;height:12.3px;line-height:12.3px;font-size:8.2px;color:#262626;font-weight:500;transform:scaleX(0.8992);">に変換</span>
<span class="t" style="left:558.6px;top:106.05px;height:12.3px;line-height:12.3px;font-size:8.2px;color:#3a3a3a;font-weight:500;transform:scaleX(0.9518);">段落</span>
<span class="t" style="left:810.6px;top:79.75px;height:12.3px;line-height:12.3px;font-size:8.2px;color:#262626;font-weight:500;transform:scaleX(0.9823);">配置</span>
<span class="t" style="left:840.4px;top:79.75px;height:12.3px;line-height:12.3px;font-size:8.2px;color:#262626;font-weight:500;transform:scaleX(0.6562);">クイック</span>
<span class="t" style="left:834.9px;top:89.45px;height:12.3px;line-height:12.3px;font-size:8.2px;color:#262626;font-weight:500;transform:scaleX(0.7599);">スタイル</span>
<span class="t" style="left:886.3px;top:56.65px;height:12.3px;line-height:12.3px;font-size:8.2px;color:#262626;font-weight:500;transform:scaleX(0.8293);">図形の塗りつぶし</span>
<span class="t" style="left:886.3px;top:74.15px;height:12.3px;line-height:12.3px;font-size:8.2px;color:#262626;font-weight:500;transform:scaleX(0.9303);">図形の枠線</span>
<span class="t" style="left:886.3px;top:91.65px;height:12.3px;line-height:12.3px;font-size:8.2px;color:#262626;font-weight:500;transform:scaleX(0.9303);">図形の効果</span>
<span class="t" style="left:797.6px;top:106.05px;height:12.3px;line-height:12.3px;font-size:8.2px;color:#3a3a3a;font-weight:500;transform:scaleX(1.0010);">図形描画</span>
<span class="t" style="left:977.6px;top:57.15px;height:12.3px;line-height:12.3px;font-size:8.2px;color:#262626;font-weight:500;transform:scaleX(0.9279);">検索と置換</span>
<span class="t" style="left:977.6px;top:74.45px;height:12.3px;line-height:12.3px;font-size:8.2px;color:#262626;font-weight:500;transform:scaleX(0.7867);">フォントの置換</span>
<span class="t" style="left:977.9px;top:91.95px;height:12.3px;line-height:12.3px;font-size:8.2px;color:#262626;font-weight:500;transform:scaleX(0.9762);">選択</span>
<span class="t" style="left:986.9px;top:106.05px;height:12.3px;line-height:12.3px;font-size:8.2px;color:#3a3a3a;font-weight:500;transform:scaleX(1.0067);">編集</span>
<span class="t" style="left:1039.6px;top:80.25px;height:12.3px;line-height:12.3px;font-size:8.2px;color:#262626;font-weight:500;transform:scaleX(0.7331);">ディクテー</span>
<span class="t" style="left:1042.6px;top:89.75px;height:12.3px;line-height:12.3px;font-size:8.2px;color:#262626;font-weight:500;transform:scaleX(0.7039);">ション</span>
<span class="t" style="left:1046.6px;top:106.05px;height:12.3px;line-height:12.3px;font-size:8.2px;color:#3a3a3a;font-weight:500;transform:scaleX(0.9762);">音声</span>
<span class="t" style="left:1089.1px;top:79.25px;height:12.3px;line-height:12.3px;font-size:8.2px;color:#262626;font-weight:500;transform:scaleX(0.7504);">アド</span>
<span class="t" style="left:1089.1px;top:89.05px;height:12.3px;line-height:12.3px;font-size:8.2px;color:#262626;font-weight:500;transform:scaleX(0.7504);">イン</span>
<span class="t" style="left:1083.6px;top:106.05px;height:12.3px;line-height:12.3px;font-size:8.2px;color:#3a3a3a;font-weight:500;transform:scaleX(0.7203);">アドイン</span>
<span class="t" style="left:1127.6px;top:79.25px;height:12.3px;line-height:12.3px;font-size:8.2px;color:#262626;font-weight:500;transform:scaleX(0.8114);">デザ</span>
<span class="t" style="left:1124.6px;top:89.05px;height:12.3px;line-height:12.3px;font-size:8.2px;color:#262626;font-weight:500;transform:scaleX(0.7703);">イナー</span>
<span class="t" style="left:15.6px;top:129.15px;height:12.3px;line-height:12.3px;font-size:8.2px;color:#b4462b;font-weight:500;transform:scaleX(0.9863);">1</span>
<span class="t" style="left:1095.5px;top:127.48px;height:14.85px;line-height:14.85px;font-size:9.9px;color:#1e1e1e;font-weight:700;transform:scaleX(0.9965);">図形の書式設定</span>
<span class="t" style="left:1101.8px;top:156.25px;height:11.7px;line-height:11.7px;font-size:7.8px;color:#262626;font-weight:700;transform:scaleX(0.8802);">図形のオプション</span>
<span class="t" style="left:1174.9px;top:156.25px;height:11.7px;line-height:11.7px;font-size:7.8px;color:#333;font-weight:500;transform:scaleX(0.8192);">文字のオプション</span>
<span class="t" style="left:1113.2px;top:216.5px;height:12.0px;line-height:12.0px;font-size:8px;color:#262626;font-weight:700;transform:scaleX(0.8380);">塗りつぶし</span>
<span class="t" style="left:1113.6px;top:234.9px;height:12.0px;line-height:12.0px;font-size:8px;color:#262626;font-weight:700;">線</span>
<span class="t" style="left:13.5px;top:669.15px;height:12.3px;line-height:12.3px;font-size:8.2px;color:#333;font-weight:500;transform:scaleX(0.6714);">スライド</span>
<span class="t" style="left:39.2px;top:669.15px;height:12.3px;line-height:12.3px;font-size:8.2px;color:#333;font-weight:500;transform:scaleX(1.0711);">1/1</span>
<span class="t" style="left:84.6px;top:669.15px;height:12.3px;line-height:12.3px;font-size:8.2px;color:#333;font-weight:500;transform:scaleX(0.9683);">日本語</span>
<span class="t" style="left:131.7px;top:669.15px;height:12.3px;line-height:12.3px;font-size:8.2px;color:#333;font-weight:500;transform:scaleX(0.7581);">アクセシビリティ:</span>
<span class="t" style="left:186.1px;top:669.15px;height:12.3px;line-height:12.3px;font-size:8.2px;color:#333;font-weight:500;transform:scaleX(0.9228);">検討が必要です</span>
<span class="t" style="left:945.6px;top:669.15px;height:12.3px;line-height:12.3px;font-size:8.2px;color:#333;font-weight:500;transform:scaleX(0.7324);">ノート</span>
<span class="t" style="left:985.6px;top:669.15px;height:12.3px;line-height:12.3px;font-size:8.2px;color:#333;font-weight:500;transform:scaleX(0.9797);">表示設定</span>
<span class="t" style="left:1232.1px;top:669.15px;height:12.3px;line-height:12.3px;font-size:8.2px;color:#333;font-weight:500;transform:scaleX(1.0309);">100%</span>
<span class="t" style="left:265.2px;top:81.4px;height:13.8px;line-height:13.8px;font-size:9.2px;color:#333;font-weight:700;transform:scaleX(0.7831);">B</span>
<span class="t" style="left:283.2px;top:80.95px;height:14.7px;line-height:14.7px;font-size:9.8px;color:#333;font-weight:700;transform:scaleX(0.9665);font-family:'Liberation Serif',serif;font-style:italic;">I</span>
<span class="t" style="left:298.9px;top:81.25px;height:13.5px;line-height:13.5px;font-size:9px;color:#333;font-weight:400;transform:scaleX(0.7846);">U</span>
<span class="t" style="left:316.2px;top:81.25px;height:14.1px;line-height:14.1px;font-size:9.4px;color:#333;font-weight:700;transform:scaleX(0.7661);">S</span>
<span class="t" style="left:332px;top:82.5px;height:12.0px;line-height:12.0px;font-size:8px;color:#444;font-weight:400;transform:scaleX(1.0105);">ab</span>
<span class="t" style="left:347.8px;top:79.65px;height:12.9px;line-height:12.9px;font-size:8.6px;color:#444;font-weight:400;transform:scaleX(1.0620);">AV</span>
<span class="t" style="left:375.8px;top:81.3px;height:14.4px;line-height:14.4px;font-size:9.6px;color:#444;font-weight:400;transform:scaleX(0.9957);">Aa</span>
<span class="t" style="left:407.2px;top:57.95px;height:17.1px;line-height:17.1px;font-size:11.4px;color:#444;font-weight:400;transform:scaleX(0.9856);">A</span>
<span class="t" style="left:425.1px;top:60.9px;height:13.2px;line-height:13.2px;font-size:8.8px;color:#444;font-weight:400;transform:scaleX(1.0383);">A</span>
<span class="t" style="left:442.9px;top:57.95px;height:17.1px;line-height:17.1px;font-size:11.4px;color:#444;font-weight:400;transform:scaleX(0.7228);">A</span>
<span class="t" style="left:435.1px;top:79.95px;height:13.5px;line-height:13.5px;font-size:9px;color:#444;font-weight:400;transform:scaleX(1.0473);">A</span>
</div>
</div>
</body>
</html>
